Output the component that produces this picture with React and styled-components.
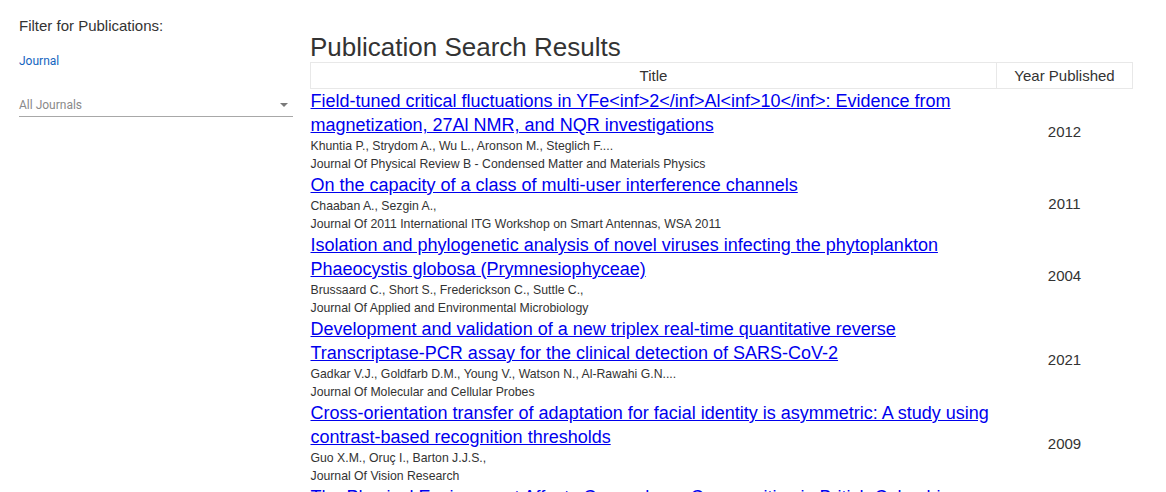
import React from 'react';
import styled, { createGlobalStyle } from 'styled-components';

const GlobalStyle = createGlobalStyle`
    body {
        margin: 0;
        background: #fff;
        font-family: "Liberation Sans", Arial, sans-serif;
        color: #333;
    }
`;

const Page = styled.div`
    display: flex;
    gap: 17px;
    padding-left: 19px;
    height: 492px;
    overflow: hidden;
`;

const Sidebar = styled.aside`
    width: 274px;
    flex-shrink: 0;
    padding-top: 16px;
`;

const FilterTitle = styled.div`
    font-size: 15px;
    line-height: 20px;
    color: #333;
`;

const FilterLabel = styled.div`
    margin-top: 17px;
    font-family: Roboto, sans-serif;
    font-size: 12px;
    line-height: 16px;
    color: #1565c0;
`;

const Select = styled.div`
    margin-top: 25px;
    display: flex;
    align-items: center;
    justify-content: space-between;
    height: 22px;
    border-bottom: 1px solid #a8a8a8;
    font-family: Roboto, sans-serif;
    font-size: 12px;
    color: #8a8a8a;
`;

const Arrow = styled.span`
    width: 0;
    height: 0;
    margin-right: 5px;
    border-left: 4px solid transparent;
    border-right: 4px solid transparent;
    border-top: 4px solid #7a7a7a;
`;

const Main = styled.main`
    width: 823px;
    padding-top: 32px;
`;

const Heading = styled.h1`
    margin: 0;
    font-size: 26px;
    font-weight: 400;
    line-height: 30px;
    color: #333;
`;

const Table = styled.table`
    width: 100%;
    border-collapse: collapse;
    table-layout: fixed;
`;

const HeadCell = styled.th`
    width: ${p => p.$width || 'auto'};
    height: 25px;
    padding: 0;
    border: 1px solid #e8e8e8;
    font-size: 15px;
    font-weight: 400;
    color: #333;
    text-align: center;
`;

const TitleCell = styled.td`
    padding: 0;
    vertical-align: top;
`;

const YearCell = styled.td`
    padding: 0;
    text-align: center;
    vertical-align: middle;
    font-size: 15px;
    color: #333;
`;

const TitleLink = styled.a`
    display: block;
    font-size: 18px;
    line-height: 24px;
    color: #0000ee;
    text-decoration: underline;
`;

const Meta = styled.div`
    font-size: 12.25px;
    line-height: 18px;
    color: #333;
`;

const publications = [
    {
        title: 'Field-tuned critical fluctuations in YFe<inf>2</inf>Al<inf>10</inf>: Evidence from magnetization, 27Al NMR, and NQR investigations',
        authors: 'Khuntia P., Strydom A., Wu L., Aronson M., Steglich F....',
        journal: 'Journal Of Physical Review B - Condensed Matter and Materials Physics',
        year: 2012,
    },
    {
        title: 'On the capacity of a class of multi-user interference channels',
        authors: 'Chaaban A., Sezgin A.,',
        journal: 'Journal Of 2011 International ITG Workshop on Smart Antennas, WSA 2011',
        year: 2011,
    },
    {
        title: 'Isolation and phylogenetic analysis of novel viruses infecting the phytoplankton Phaeocystis globosa (Prymnesiophyceae)',
        authors: 'Brussaard C., Short S., Frederickson C., Suttle C.,',
        journal: 'Journal Of Applied and Environmental Microbiology',
        year: 2004,
    },
    {
        title: 'Development and validation of a new triplex real-time quantitative reverse Transcriptase-PCR assay for the clinical detection of SARS-CoV-2',
        authors: 'Gadkar V.J., Goldfarb D.M., Young V., Watson N., Al-Rawahi G.N....',
        journal: 'Journal Of Molecular and Cellular Probes',
        year: 2021,
    },
    {
        title: 'Cross-orientation transfer of adaptation for facial identity is asymmetric: A study using contrast-based recognition thresholds',
        authors: 'Guo X.M., Oruç I., Barton J.J.S.,',
        journal: 'Journal Of Vision Research',
        year: 2009,
    },
    {
        title: 'The Physical Environment Affects Cyanophage Communities in British Columbia Inlets',
        authors: 'Frederickson C., Short S., Suttle C.,',
        journal: 'Journal Of Microbial Ecology',
        year: 2003,
    },
];

export default function App() {
    return (
        <Page>
            <GlobalStyle />
            <Sidebar>
                <FilterTitle>Filter for Publications:</FilterTitle>
                <FilterLabel>Journal</FilterLabel>
                <Select>
                    All Journals
                    <Arrow />
                </Select>
            </Sidebar>
            <Main>
                <Heading>Publication Search Results</Heading>
                <Table>
                    <thead>
                        <tr>
                            <HeadCell>Title</HeadCell>
                            <HeadCell $width="135px">Year Published</HeadCell>
                        </tr>
                    </thead>
                    <tbody>
                        {publications.map(pub => (
                            <tr key={pub.title}>
                                <TitleCell>
                                    <TitleLink href="#">{pub.title}</TitleLink>
                                    <Meta>{pub.authors}</Meta>
                                    <Meta>{pub.journal}</Meta>
                                </TitleCell>
                                <YearCell>{pub.year}</YearCell>
                            </tr>
                        ))}
                    </tbody>
                </Table>
            </Main>
        </Page>
    );
}
